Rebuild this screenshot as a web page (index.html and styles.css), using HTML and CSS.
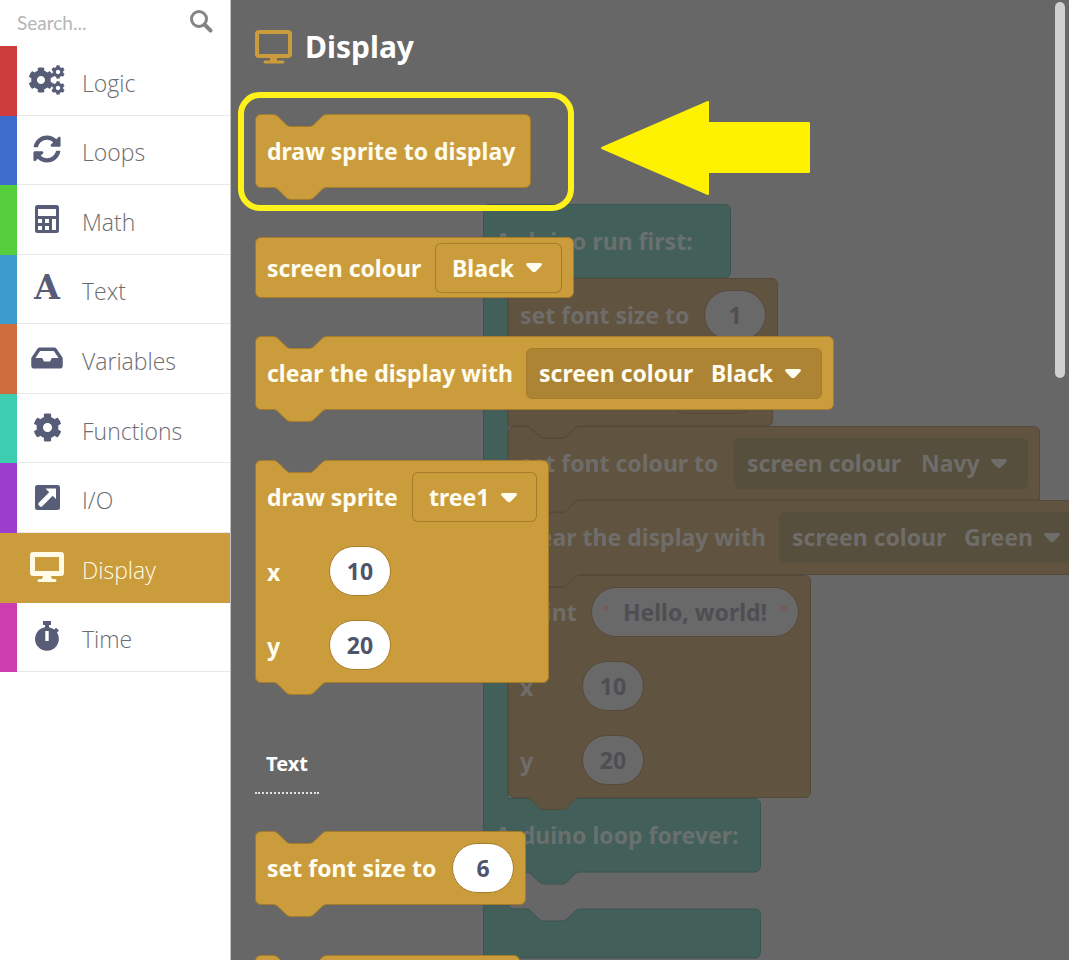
FILE: index.html
```html
<!DOCTYPE html>
<html lang="en">
<head>
<meta charset="utf-8">
<meta name="viewport" content="width=device-width, initial-scale=1">
<title>Display blocks</title>
<link rel="stylesheet" href="styles.css">
</head>
<body>
<svg class="sprite" aria-hidden="true">
  <symbol id="cog" viewBox="0 0 512 512"><path d="M487.4 315.7l-42.6-24.6c4.3-23.2 4.3-47 0-70.2l42.6-24.6c4.9-2.8 7.1-8.6 5.5-14-11.1-35.6-30-67.8-54.7-94.6-3.8-4.1-10-5.1-14.8-2.3L380.8 110c-17.9-15.4-38.5-27.3-60.8-35.1V25.8c0-5.6-3.9-10.5-9.4-11.7-36.7-8.2-74.3-7.8-109.2 0-5.5 1.2-9.4 6.1-9.4 11.7V75c-22.2 7.9-42.8 19.8-60.8 35.1L88.7 85.5c-4.9-2.8-11-1.9-14.8 2.3-24.7 26.7-43.6 58.9-54.7 94.6-1.7 5.4.6 11.2 5.5 14L67.3 221c-4.3 23.2-4.3 47 0 70.2l-42.6 24.6c-4.9 2.8-7.1 8.6-5.5 14 11.1 35.6 30 67.8 54.7 94.6 3.8 4.1 10 5.1 14.8 2.3l42.6-24.6c17.9 15.4 38.5 27.3 60.8 35.1v49.2c0 5.6 3.9 10.5 9.4 11.7 36.7 8.2 74.3 7.8 109.2 0 5.5-1.2 9.4-6.1 9.4-11.7v-49.2c22.2-7.9 42.8-19.8 60.8-35.1l42.6 24.6c4.9 2.8 11 1.9 14.8-2.3 24.7-26.7 43.6-58.9 54.7-94.6 1.5-5.5-.7-11.3-5.6-14.1zM256 336c-44.1 0-80-35.9-80-80s35.9-80 80-80 80 35.9 80 80-35.9 80-80 80z"/></symbol>
  <symbol id="caret" viewBox="0 0 18 11"><path d="M3 1h12c2 0 2.600 1.500 1.300 2.800l-5.500 5.800c-1 1-2.600 1-3.600 0L1.700 3.800C.4 2.500 1 1 3 1z"/></symbol>
</svg>

<nav class="toolbox" aria-label="Toolbox">
  <div class="search">
    <input type="search" placeholder="Search..." aria-label="Search blocks">
    <svg width="24" height="24" viewBox="0 0 24 24" fill="none" stroke="#858585"><circle cx="10" cy="10" r="7.500" stroke-width="3"/><path d="M15.500 15.500l6 6" stroke-width="4" stroke-linecap="round"/></svg>
  </div>
  <ul class="categories">
    <li><button class="category logic"><span class="icon"><svg width="36" height="30" viewBox="0 0 36 30"><use href="#cog" x="-1" y="2" width="26" height="26"/><use href="#cog" x="22" y="0" width="14" height="14"/><use href="#cog" x="22" y="16" width="14" height="14"/></svg></span><span class="name">Logic</span></button></li>
    <li><button class="category loops"><span class="icon"><svg width="28" height="28" viewBox="0 0 512 512"><path d="M370.720 133.280C339.458 104.008 298.888 87.962 255.848 88c-77.458.068-144.328 53.178-162.791 126.850-1.344 5.363-6.122 9.150-11.651 9.150H24.103c-7.498 0-13.194-6.807-11.807-14.176C33.933 94.924 134.813 8 256 8c66.448 0 126.791 26.136 171.315 68.685L463.030 40.970C478.149 25.851 504 36.559 504 57.941V192c0 13.255-10.745 24-24 24H345.941c-21.382 0-32.090-25.851-16.971-40.971l41.750-41.749zM32 296h134.059c21.382 0 32.090 25.851 16.971 40.971l-41.750 41.750c31.262 29.273 71.835 45.319 114.876 45.280 77.418-.07 144.315-53.144 162.787-126.849 1.344-5.363 6.122-9.150 11.651-9.150h57.304c7.498 0 13.194 6.807 11.807 14.176C478.067 417.076 377.187 504 256 504c-66.448 0-126.791-26.136-171.315-68.685L48.970 471.030C33.851 486.149 8 475.441 8 454.059V320c0-13.255 10.745-24 24-24z"/></svg></span><span class="name">Loops</span></button></li>
    <li><button class="category math"><span class="icon"><svg width="26" height="28" viewBox="0 0 26 28"><path fill-rule="evenodd" d="M3.500 0h19A2.500 2.500 0 0 1 25 2.500v23a2.500 2.500 0 0 1-2.500 2.500h-19A2.500 2.500 0 0 1 1 25.500v-23A2.500 2.500 0 0 1 3.500 0zM4 4v7h18V4zM4 14v4h4v-4zM11 14v4h4v-4zM18 14v11h4V14zM4 21v4h4v-4zM11 21v4h4v-4z"/></svg></span><span class="name">Math</span></button></li>
    <li><button class="category text"><span class="icon glyph" aria-hidden="true">A</span><span class="name">Text</span></button></li>
    <li><button class="category variables"><span class="icon"><svg width="32" height="28" viewBox="0 0 576 512"><path d="M567.938 243.908L462.250 85.374A48.003 48.003 0 0 0 422.311 64H153.689a48 48 0 0 0-39.938 21.374L8.062 243.908A47.994 47.994 0 0 0 0 270.533V400c0 26.510 21.490 48 48 48h480c26.510 0 48-21.490 48-48V270.533a47.994 47.994 0 0 0-8.062-26.625zM162.252 128h251.497l85.333 128H376l-32 64H232l-32-64H76.918l85.334-128z"/></svg></span><span class="name">Variables</span></button></li>
    <li><button class="category functions"><span class="icon"><svg width="29" height="29"><use href="#cog"/></svg></span><span class="name">Functions</span></button></li>
    <li><button class="category io"><span class="icon"><svg width="26" height="26" viewBox="0 0 26 26"><rect x="1" y="1" width="25" height="25" rx="2.500"/><path d="M11.500 4.500h10.500v10.500l-3.300-3.300L8.200 22.200c-.8.800-1.600.8-2.400 0l-1-1c-.8-.8-.8-1.600 0-2.400L15.200 8.200z" fill="#fff"/></svg></span><span class="name">I/O</span></button></li>
    <li><button class="category display" aria-current="true"><span class="icon"><svg width="34" height="30" viewBox="0 0 34 30"><path fill-rule="evenodd" d="M3 0h28a3 3 0 0 1 3 3v18a3 3 0 0 1-3 3H21l1 3h3a1.500 1.500 0 0 1 0 3H9a1.500 1.500 0 0 1 0-3h3l1-3H3a3 3 0 0 1-3-3V3a3 3 0 0 1 3-3zM5 5v14h24V5z"/></svg></span><span class="name">Display</span></button></li>
    <li><button class="category time"><span class="icon"><svg width="26" height="30" viewBox="0 0 26 30"><path fill-rule="evenodd" d="M9 0h8v4h-2v2.200c2 .4 3.800 1.200 5.300 2.400l1.700-1.800 3 2.600-2 2.200A11.900 11.900 0 1 1 11 6.200V4H9zM11.300 10v10h3.400V10z"/></svg></span><span class="name">Time</span></button></li>
  </ul>
</nav>

<main class="stage">
  <div class="workspace" inert>
    <div class="program">
      <svg class="shell" width="280" height="756"><path d="M.5 6a5.500 5.500 0 0 1 5.500-5.500H242a5.500 5.500 0 0 1 5.500 5.500V68.500a5.500 5.500 0 0 1-5.500 5.500H25V594.500H272a5.500 5.500 0 0 1 5.500 5.500V662.500a5.500 5.500 0 0 1-5.500 5.500H97c-3 0-4.500 1.500-6 3l-6 6c-1.500 1.500-3 3-6 3H61c-3 0-4.500-1.500-6-3l-6-6c-1.500-1.500-3-3-6-3H31a6 6 0 0 0-6 6V699a6 6 0 0 0 6 6H43c3 0 4.500 1.500 6 3l6 6c1.500 1.500 3 3 6 3h18c3 0 4.500-1.500 6-3l6-6c1.500-1.500 3-3 6-3H272a5.500 5.500 0 0 1 5.500 5.500V748.500a5.500 5.500 0 0 1-5.500 5.500H6a5.500 5.500 0 0 1-5.500-5.500z"/></svg>
      <div class="program-body">
        <div class="row">Arduino run first:</div>
        <div class="stack">
          <div class="block">
            <svg class="shape" width="270" height="74"><path d="M.5 6a5.500 5.500 0 0 1 5.500-5.500H264a5.500 5.500 0 0 1 5.500 5.500V74H72c-3 0-4.500 1.500-6 3l-6 6c-1.500 1.500-3 3-6 3H36c-3 0-4.500-1.500-6-3l-6-6c-1.500-1.500-3-3-6-3H.5z"/></svg>
            <div class="content"><div class="row"><label for="w1">set font size to</label><input class="pill" id="w1" value="1"></div></div>
          </div>
          <div class="block">
            <svg class="shape" width="265" height="74"><path d="M.5 0H18c3 0 4.500 1.500 6 3l6 6c1.500 1.500 3 3 6 3h18c3 0 4.500-1.500 6-3l6-6c1.500-1.500 3-3 6-3H264.500V68.500a5.500 5.500 0 0 1-5.500 5.500H72c-3 0-4.500 1.500-6 3l-6 6c-1.500 1.500-3 3-6 3H36c-3 0-4.500-1.500-6-3l-6-6c-1.500-1.500-3-3-6-3H.5z"/></svg>
            <div class="content"><div class="row end"><span class="slot"></span></div></div>
          </div>
          <div class="block">
            <svg class="shape" width="532" height="74"><path d="M.5 6a5.500 5.500 0 0 1 5.500-5.500H18c3 0 4.500 1.500 6 3l6 6c1.500 1.500 3 3 6 3h18c3 0 4.500-1.500 6-3l6-6c1.500-1.500 3-3 6-3H526a5.500 5.500 0 0 1 5.500 5.500V74H72c-3 0-4.500 1.500-6 3l-6 6c-1.500 1.500-3 3-6 3H36c-3 0-4.500-1.500-6-3l-6-6c-1.500-1.500-3-3-6-3H.5z"/></svg>
            <div class="content"><div class="row"><span>set font colour to</span><span class="nested navy"><label for="w2">screen colour</label><span class="pick"><select id="w2"><option>Navy</option></select><svg width="18" height="11"><use href="#caret"/></svg></span></span></div></div>
          </div>
          <div class="block">
            <svg class="shape" width="585" height="75"><path d="M.5 0.500H18c3 0 4.500 1.500 6 3l6 6c1.500 1.500 3 3 6 3h18c3 0 4.500-1.500 6-3l6-6c1.500-1.500 3-3 6-3H584V74.500H72c-3 0-4.500 1.500-6 3l-6 6c-1.500 1.500-3 3-6 3H36c-3 0-4.500-1.500-6-3l-6-6c-1.500-1.500-3-3-6-3H.5z"/></svg>
            <div class="content"><div class="row"><span>clear the display with</span><span class="nested green"><label for="w3">screen colour</label><span class="pick"><select id="w3"><option>Green</option></select><svg width="18" height="11"><use href="#caret"/></svg></span></span></div></div>
          </div>
          <div class="block">
            <svg class="shape" width="303" height="223"><path d="M.5 .5H18c3 0 4.500 1.500 6 3l6 6c1.500 1.500 3 3 6 3h18c3 0 4.500-1.500 6-3l6-6c1.500-1.500 3-3 6-3H297a5.500 5.500 0 0 1 5.500 5.500V217a5.500 5.500 0 0 1-5.500 5.500H72c-3 0-4.500 1.500-6 3l-6 6c-1.500 1.500-3 3-6 3H36c-3 0-4.500-1.500-6-3l-6-6c-1.500-1.500-3-3-6-3H6a5.500 5.500 0 0 1-5.500-5.500z"/></svg>
            <div class="content">
              <div class="row"><label for="w4">print</label><span class="quoted"><i>"</i><input id="w4" value="Hello, world!"><i>"</i></span></div>
              <div class="row param"><label for="w5">x</label><input class="pill" id="w5" value="10"></div>
              <div class="row param"><label for="w6">y</label><input class="pill" id="w6" value="20"></div>
            </div>
          </div>
        </div>
        <div class="row">Arduino loop forever:</div>
      </div>
    </div>
  </div>

  <section class="flyout" aria-label="Display blocks">
    <h1><svg width="37" height="34" viewBox="0 0 37 34" fill="none" stroke="#cb9c3c"><rect x="2" y="2" width="33" height="24" rx="2" stroke-width="4"/><path d="M15 28h7v3h-7z" fill="#cb9c3c" stroke="none"/><path d="M10 32h18" stroke-width="3" stroke-linecap="round"/></svg>Display</h1>

    <div class="block first">
      <svg class="shape" width="276" height="74"><path d="M.5 6a5.500 5.500 0 0 1 5.500-5.500H18c3 0 4.500 1.500 6 3l6 6c1.500 1.500 3 3 6 3h18c3 0 4.500-1.500 6-3l6-6c1.500-1.500 3-3 6-3H270a5.500 5.500 0 0 1 5.500 5.500V68a5.500 5.500 0 0 1-5.500 5.500H72c-3 0-4.500 1.500-6 3l-6 6c-1.500 1.500-3 3-6 3H36c-3 0-4.500-1.500-6-3l-6-6c-1.500-1.500-3-3-6-3H6a5.500 5.500 0 0 1-5.500-5.500z"/></svg>
      <div class="content"><div class="row">draw sprite to display</div></div>
      <span class="highlight"></span>
      <svg class="arrow" width="210" height="94" viewBox="0 0 210 94"><path d="M1 47L107 1v21h101v49H107v22z" fill="#fff200" stroke="#fff200" stroke-width="2" stroke-linejoin="round"/></svg>
    </div>

    <div class="block second">
      <svg class="shape" width="319" height="61"><rect x=".5" y=".5" width="318" height="60" rx="5.500"/></svg>
      <div class="content"><div class="row short"><label for="f1">screen colour</label><span class="pick boxed"><select id="f1"><option>Black</option></select><svg width="18" height="11"><use href="#caret"/></svg></span></div></div>
    </div>

    <div class="block third">
      <svg class="shape" width="579" height="74"><path d="M.5 6a5.500 5.500 0 0 1 5.500-5.500H18c3 0 4.500 1.500 6 3l6 6c1.500 1.500 3 3 6 3h18c3 0 4.500-1.500 6-3l6-6c1.500-1.500 3-3 6-3H573a5.500 5.500 0 0 1 5.500 5.500V68a5.500 5.500 0 0 1-5.500 5.500H72c-3 0-4.500 1.500-6 3l-6 6c-1.500 1.500-3 3-6 3H36c-3 0-4.500-1.500-6-3l-6-6c-1.500-1.500-3-3-6-3H6a5.500 5.500 0 0 1-5.500-5.500z"/></svg>
      <div class="content"><div class="row"><span>clear the display with</span><span class="nested"><label for="f2">screen colour</label><span class="pick"><select id="f2"><option>Black</option></select><svg width="18" height="11"><use href="#caret"/></svg></span></span></div></div>
    </div>

    <div class="block fourth">
      <svg class="shape" width="294" height="223"><path d="M.5 6a5.500 5.500 0 0 1 5.500-5.500H18c3 0 4.500 1.500 6 3l6 6c1.500 1.500 3 3 6 3h18c3 0 4.500-1.500 6-3l6-6c1.500-1.500 3-3 6-3H288a5.500 5.500 0 0 1 5.500 5.500V217a5.500 5.500 0 0 1-5.500 5.500H72c-3 0-4.500 1.500-6 3l-6 6c-1.500 1.500-3 3-6 3H36c-3 0-4.500-1.500-6-3l-6-6c-1.500-1.500-3-3-6-3H6a5.500 5.500 0 0 1-5.500-5.500z"/></svg>
      <div class="content">
        <div class="row"><label for="f3">draw sprite</label><span class="pick boxed"><select id="f3"><option>tree1</option></select><svg width="18" height="11"><use href="#caret"/></svg></span></div>
        <div class="row param"><label for="f4">x</label><input class="pill" id="f4" value="10"></div>
        <div class="row param"><label for="f5">y</label><input class="pill" id="f5" value="20"></div>
      </div>
    </div>

    <h2>Text</h2>

    <div class="block fifth">
      <svg class="shape" width="271" height="74"><path d="M.5 6a5.500 5.500 0 0 1 5.500-5.500H18c3 0 4.500 1.500 6 3l6 6c1.500 1.500 3 3 6 3h18c3 0 4.500-1.500 6-3l6-6c1.500-1.500 3-3 6-3H265a5.500 5.500 0 0 1 5.500 5.500V68a5.500 5.500 0 0 1-5.500 5.500H72c-3 0-4.500 1.500-6 3l-6 6c-1.500 1.500-3 3-6 3H36c-3 0-4.500-1.500-6-3l-6-6c-1.500-1.500-3-3-6-3H6a5.500 5.500 0 0 1-5.500-5.500z"/></svg>
      <div class="content"><div class="row"><label for="f6">set font size to</label><input class="pill" id="f6" value="6"></div></div>
    </div>

    <div class="block">
      <svg class="shape" width="265" height="74"><path d="M.5 6a5.500 5.500 0 0 1 5.500-5.500H18c3 0 4.500 1.500 6 3l6 6c1.500 1.500 3 3 6 3h18c3 0 4.500-1.500 6-3l6-6c1.500-1.500 3-3 6-3H259a5.500 5.500 0 0 1 5.500 5.500V73.500H.5z"/></svg>
    </div>
  </section>
  <span class="scroll-thumb"></span>
</main>
</body>
</html>
```
FILE: styles.css
```css
* { box-sizing: border-box; }

body {
  display: flex;
  height: 100vh;
  margin: 0;
  overflow: hidden;
  background: #fff;
  font-family: "Noto Sans", "Open Sans", sans-serif;
}

svg { display: block; flex: none; }
.sprite { position: absolute; width: 0; height: 0; }

input, select, button { font: inherit; color: inherit; }

/* Toolbox */
.toolbox {
  flex: none;
  width: 231px;
  border-right: 1px solid #c4c4c4;
  background: #fff;
}

.search {
  display: flex;
  align-items: center;
  height: 46px;
  padding: 0 17px 2px;
}

.search input {
  flex: 1;
  min-width: 0;
  padding: 0;
  border: 0;
  outline: 0;
  background: none;
  font-family: Lato, sans-serif;
  font-size: 19px;
}

.search input::placeholder { color: #b5b5b5; }
.search svg { margin-bottom: 2px; }

.categories {
  display: flex;
  flex-direction: column;
  height: 626px;
  margin: 0;
  padding: 0;
  list-style: none;
}

.categories li { flex: 1; display: flex; }

.category {
  flex: 1;
  display: flex;
  align-items: center;
  gap: 17px;
  padding: 0 0 2px 12px;
  border: 0;
  border-left: 17px solid var(--tone);
  background: linear-gradient(#e8e8e8, #e8e8e8) bottom / 100% 1px no-repeat;
  color: #575c77;
  text-align: left;
}

.icon {
  display: flex;
  align-items: center;
  justify-content: center;
  width: 36px;
  height: 36px;
  fill: currentColor;
}

.glyph { font: bold 33px/36px "DejaVu Serif", serif; }

.name {
  padding-top: 6px;
  color: #6c6c70;
  font-family: "Open Sans", sans-serif;
  font-size: 23px;
  font-weight: 300;
}

.logic { --tone: #cd3d3d; }
.loops { --tone: #3d6ccd; }
.math { --tone: #55cd3d; }
.text { --tone: #3d9ccd; }
.variables { --tone: #cd6c3d; }
.functions { --tone: #3dcdb1; }
.io { --tone: #9c3dcd; }
.display { --tone: #cb9c3c; background: #cb9c3c; color: #fffbe6; }
.display .name { color: #fffbe6; }
.time { --tone: #cd3db0; }

/* Stage */
.stage {
  position: relative;
  flex: 1;
  min-width: 0;
  overflow: hidden;
  background: #676767;
  font-size: 23px;
  font-weight: 700;
  line-height: 32px;
}

/* Blocks */
.block, .program { display: grid; position: relative; width: max-content; }

.shape, .shell, .content, .program-body { grid-area: 1 / 1; }
.shape, .shell { overflow: visible; fill: var(--fill); stroke: var(--edge); }
.block { color: var(--ink); white-space: nowrap; }

.row {
  display: flex;
  align-items: center;
  justify-content: space-between;
  height: 74px;
  padding: 0 12px;
}

.row.short { height: 61px; }
.row.end { justify-content: flex-end; }
.row.param { justify-content: flex-start; }
.param label { width: 62px; padding-top: 2px; }

.pill {
  width: 62px;
  height: 50px;
  padding: 0;
  border: 1px solid var(--edge);
  border-radius: 25px;
  outline: 0;
  background: var(--field);
  color: var(--field-ink);
  font-weight: 700;
  text-align: center;
}

.pick { position: relative; display: flex; align-items: center; }

.pick select {
  appearance: none;
  height: 50px;
  padding: 0 47px 0 17px;
  border: 0;
  outline: 0;
  background: none;
}

.pick svg { position: absolute; right: 19px; fill: currentColor; pointer-events: none; }
.boxed { border-radius: 6px; box-shadow: inset 0 0 0 1px var(--edge); }

.nested {
  display: flex;
  align-items: center;
  justify-content: space-between;
  width: 296px;
  height: 51px;
  padding-left: 12px;
  border: 1px solid var(--edge);
  border-radius: 6px;
  background: var(--inner);
}

/* Workspace, dimmed under the flyout */
.workspace {
  --fill: #605340;
  --edge: #554a3a;
  --ink: #6f6d69;
  --inner: #574f3d;
  --field: #696969;
  --field-ink: #4e4e53;
  position: absolute;
  inset: 0;
}

.program { position: absolute; left: 252px; top: 204px; color: #69716f; }
.shell { fill: #435f59; stroke: #3c5550; }
.stack { padding-left: 25px; }
.workspace .block { margin-right: -400px; }
.workspace .nested { border-color: var(--inner); }
.workspace .navy { width: 294px; }
.workspace .green { width: 302px; }

.slot { width: 98px; height: 50px; border: 1px solid var(--edge); border-radius: 25px; }

.quoted {
  display: flex;
  align-items: center;
  justify-content: space-between;
  width: 208px;
  height: 50px;
  padding: 0 10px;
  border: 1px solid var(--edge);
  border-radius: 25px;
  background: var(--field);
}

.quoted i { color: #80504a; font-size: 18px; font-style: normal; font-weight: 400; }

.quoted input {
  width: 158px;
  padding: 0;
  border: 0;
  outline: 0;
  background: none;
  color: var(--field-ink);
  font-weight: 700;
  text-align: center;
}

/* Flyout */
.flyout {
  --fill: #cb9c3c;
  --edge: #a67c29;
  --ink: #fffdf0;
  --inner: #ad8433;
  --field: #fff;
  --field-ink: #4f546b;
  position: relative;
  padding: 24px 24px 0;
}

h1 {
  display: flex;
  align-items: center;
  gap: 13px;
  height: 46px;
  margin: 0 0 44px;
  color: #fff;
  font-size: 30px;
}

h2 {
  width: 64px;
  margin: 67px 0 37px;
  padding: 0 0 14px 11px;
  border-bottom: 2px dotted #e2e2e2;
  color: #fff;
  font-size: 20px;
  line-height: 28px;
}

.first { margin-bottom: 49px; }
.second { margin-bottom: 38px; }
.third { margin-bottom: 50px; }
.fifth { margin-bottom: 50px; }

.highlight {
  position: absolute;
  inset: -22px -43px -23px -17px;
  border: 6px solid #fff21a;
  border-radius: 22px;
}

.arrow { position: absolute; left: 346px; top: -13px; }

.scroll-thumb {
  position: absolute;
  top: 2px;
  right: 4px;
  width: 10px;
  height: 376px;
  border-radius: 5px;
  background: #d0d0d0;
}
```
